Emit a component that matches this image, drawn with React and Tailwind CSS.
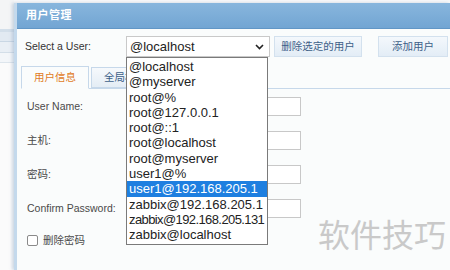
import React from "react";

const users = [
  "@localhost",
  "@myserver",
  "root@%",
  "root@127.0.0.1",
  "root@::1",
  "root@localhost",
  "root@myserver",
  "user1@%",
  "user1@192.168.205.1",
  "zabbix@192.168.205.1",
  "zabbix@192.168.205.131",
  "zabbix@localhost",
];

function Label({ children }) {
  return <div className="w-[103px] text-[10.5px] text-[#4a4a4a]">{children}</div>;
}

function Field({ label }) {
  return (
    <div className="flex items-center h-[19px]">
      <Label>{label}</Label>
      <div className="w-[171px] h-[19px] border border-[#c8c8c8] bg-white" />
    </div>
  );
}

export default function App() {
  return (
    <div
      className="relative w-[450px] h-[270px] overflow-hidden bg-[#f7f8f9] flex"
      style={{ fontFamily: '"Liberation Sans", "Noto Sans CJK SC", sans-serif' }}
    >
      {/* background page strip */}
      <div className="w-[14px] shrink-0 flex flex-col bg-white">
        <div className="h-[29px] bg-[#f4f5f6]" />
        <div className="h-[3px] bg-[#d3dfea]" />
        <div className="h-[10px] bg-[#e2eaf2] border-b border-[#c9d7e4]" />
        <div className="h-[11px] bg-[#e9eff5] border-b border-[#d3dee8]" />
        <div className="h-[10px] bg-[#f3f6f9] border-b border-[#dde5ec]" />
        <div className="flex-1 bg-[#fbfbfb]" />
      </div>

      {/* dialog */}
      <div className="flex-1 mt-[3px] flex flex-col border-l-[3px] border-[#c4d9ec] shadow-[-2px_0_3px_rgba(120,150,180,0.35)]">
        <div className="h-[26px] shrink-0 bg-gradient-to-b from-[#88b6dd] to-[#72a5d3] border-b border-[#6196c6] flex items-center pl-[9px]">
          <span className="text-white font-bold text-[11px] tracking-[0.5px]">用户管理</span>
        </div>
        <div className="flex-1 bg-[#fafcfc] pl-[4px] pt-[7px]">
          {/* select row */}
          <div className="flex items-center h-[21px] pl-[4px]">
            <div className="w-[101px] text-[10.5px] text-[#333]">Select a User:</div>
            <div className="w-[144px] h-[21px] border border-[#c9c9c9] bg-white flex items-center justify-between pl-[3px] pr-[5px]">
              <span className="text-[13px] text-[#222]">@localhost</span>
              <svg width="9" height="6" viewBox="0 0 9 6">
                <path d="M1 1 L4.5 4.5 L8 1" stroke="#222" strokeWidth="1.6" fill="none" />
              </svg>
            </div>
            <button className="ml-[4px] w-[88px] h-[21px] border border-[#d3e1ee] bg-gradient-to-b from-[#f4f8fc] to-[#e3edf6] text-[10.5px] text-[#3d5f88]">
              删除选定的用户
            </button>
            <button className="ml-[16px] w-[70px] h-[21px] border border-[#d3e1ee] bg-gradient-to-b from-[#f4f8fc] to-[#e3edf6] text-[10.5px] text-[#3d5f88]">
              添加用户
            </button>
          </div>

          {/* tabs */}
          <div className="mt-[9px] flex items-end h-[23px] border-b border-[#c6d8ea]">
            <div className="w-[68px] h-[23px] -mb-px border border-[#c6d8ea] border-b-[#fafcfc] bg-[#fafcfc] flex items-center justify-center text-[10.5px] text-[#e07b1f]">
              用户信息
            </div>
            <div className="ml-[2px] w-[68px] h-[21px] border border-[#c6d8ea] bg-gradient-to-b from-[#f6f9fc] to-[#e4edf5] flex items-center pl-[12px] text-[10.5px] text-[#3d5f88]">
              全局权限
            </div>
          </div>

          {/* form */}
          <div className="pl-[6px] pt-[8px] flex flex-col gap-[15px]">
            <Field label="User Name:" />
            <Field label="主机:" />
            <Field label="密码:" />
            <Field label="Confirm Password:" />
          </div>
          <div className="pl-[6px] mt-[15px] flex items-center gap-[5px]">
            <div className="w-[11px] h-[11px] border border-[#8a8a8a] rounded-[2px] bg-white" />
            <span className="text-[10.5px] text-[#4a4a4a]">删除密码</span>
          </div>
        </div>
      </div>

      {/* open dropdown list */}
      <div className="absolute left-[126px] top-[57px] w-[142px] border border-[#7a7a7a] bg-white py-px">
        {users.map((u) => (
          <div
            key={u}
            className={
              "h-[15.3px] leading-[15.3px] pl-[2px] text-[13px] whitespace-nowrap overflow-hidden " +
              (u === "user1@192.168.205.1" ? "bg-[#1e7fe0] text-white " : "text-[#222] ") +
              (u === "zabbix@192.168.205.131" ? "tracking-[-0.6px]" : "")
            }
          >
            {u}
          </div>
        ))}
      </div>

      {/* watermark */}
      <div className="absolute left-[318px] top-[212px] text-[32px] text-[#c9c9c9]">
        软件技巧
      </div>
    </div>
  );
}
